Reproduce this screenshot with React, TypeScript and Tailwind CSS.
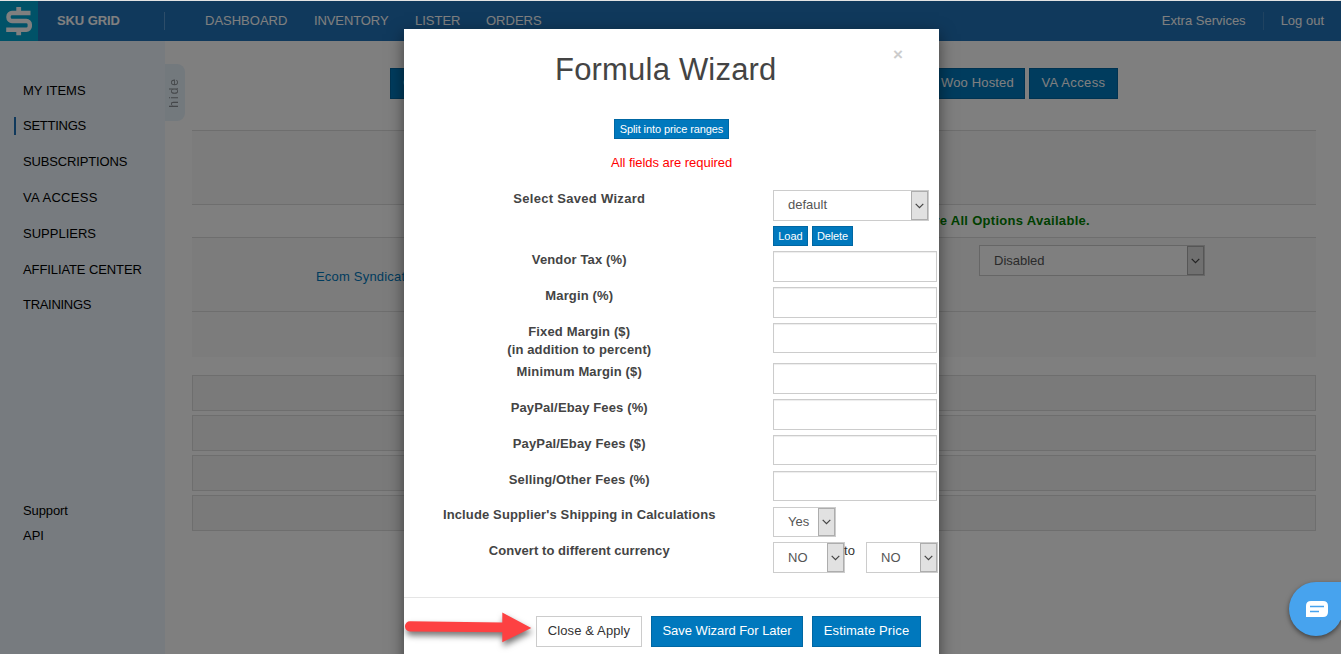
import type { ReactNode } from "react";

const navLinks = [
  { label: "DASHBOARD", width: "w-[109px]" },
  { label: "INVENTORY", width: "w-[101px] tracking-[-0.1px]" },
  { label: "LISTER", width: "w-[71px]" },
  { label: "ORDERS", width: "" },
];

const sideLinks = [
  { label: "MY ITEMS", style: "" },
  { label: "SETTINGS", style: "-mt-px tracking-[-0.25px]", active: true },
  { label: "SUBSCRIPTIONS", style: "tracking-[-0.15px]" },
  { label: "VA ACCESS", style: "tracking-[0.3px]" },
  { label: "SUPPLIERS", style: "" },
  { label: "AFFILIATE CENTER", style: "tracking-[-0.1px]" },
  { label: "TRAININGS", style: "-mt-px tracking-[-0.3px]" },
];

const feeFields = [
  { label: "Vendor Tax (%)", inputHeight: "h-[31px]" },
  { label: "Margin (%)", inputHeight: "h-[31px]" },
  { label: "Fixed Margin ($)", hint: "(in addition to percent)", inputHeight: "h-[30px]" },
  { label: "Minimum Margin ($)", inputHeight: "h-[31px]" },
  { label: "PayPal/Ebay Fees (%)", inputHeight: "h-[31px]" },
  { label: "PayPal/Ebay Fees ($)", inputHeight: "h-[30px]" },
  { label: "Selling/Other Fees (%)", inputHeight: "h-[30px]" },
];

interface SelectBoxProps {
  value: string;
  className: string;
}

function SelectBox({ value, className }: SelectBoxProps) {
  return (
    <div
      className={`flex shrink-0 border border-[#ccc] bg-white text-[13px] text-[#555] ${className}`}
    >
      <span className="flex-1 pl-3.5">{value}</span>
      <span className="flex w-[17px] items-center justify-center border border-[#adadad] bg-[#e1e1e1]">
        <svg width="9" height="6" viewBox="0 0 9 6" fill="none">
          <path d="M0.7 0.8 4.5 4.6 8.3 0.8" stroke="#444" strokeWidth="1.2" />
        </svg>
      </span>
    </div>
  );
}

interface ButtonProps {
  children?: ReactNode;
  className?: string;
}

function PrimaryButton({ children, className = "" }: ButtonProps) {
  return (
    <button
      className={`h-[31px] shrink-0 border border-[#0067a3] bg-[#0078bd] pb-0.5 text-[13px] leading-none whitespace-nowrap text-white ${className}`}
    >
      {children}
    </button>
  );
}

function SmallButton({ children, className = "" }: ButtonProps) {
  return (
    <button
      className={`h-5 border border-[#0067a3] bg-[#0078bd] text-[11px] leading-none whitespace-nowrap text-white ${className}`}
    >
      {children}
    </button>
  );
}

interface FormRowProps {
  label: string;
  hint?: string;
  className: string;
  children: ReactNode;
}

function FormRow({ label, hint, className, children }: FormRowProps) {
  return (
    <div className={`flex ${className}`}>
      <div className="mr-[18.5px] w-[350.5px] text-center text-[13px] leading-[18px] font-bold text-[#444]">
        {label}
        {hint && <div>{hint}</div>}
      </div>
      {children}
    </div>
  );
}

function Logo() {
  return (
    <div className="flex h-10 w-[38px] items-center justify-center bg-[#00a5d0]">
      <svg width="28" height="30" viewBox="0 0 28 30" fill="none">
        <path
          d="M25.5 7H7A3.5 3.5 0 0 0 3.5 10.5V11.5A3.5 3.5 0 0 0 7 15H21.3A3.5 3.5 0 0 1 24.8 18.5V20.3A3.5 3.5 0 0 1 21.3 23.8H1.2"
          stroke="#fff"
          strokeWidth="4.4"
        />
        <path d="M13.7 1V6M13.7 24V29.2" stroke="#fff" strokeWidth="4.8" />
      </svg>
    </div>
  );
}

function Header() {
  return (
    <header className="flex h-10 shrink-0 items-center bg-[#2173b8] text-[13px] text-white">
      <Logo />
      <span className="ml-[19px] w-[107px] font-bold tracking-[-0.1px]">SKU GRID</span>
      <span className="h-[18px] w-px bg-[#5b9bd2]" />
      <nav className="ml-10 flex">
        {navLinks.map((link) => (
          <span key={link.label} className={link.width}>
            {link.label}
          </span>
        ))}
      </nav>
      <span className="ml-auto">Extra Services</span>
      <span className="mx-[17px] h-[18px] w-px bg-[#4186c2]" />
      <span className="mr-[17px]">Log out</span>
    </header>
  );
}

function Sidebar() {
  return (
    <aside className="w-[165px] shrink-0 bg-[#eef7ff] pt-8 text-[13px] text-black">
      {sideLinks.map((link) => (
        <div key={link.label} className={`flex h-9 items-center ${link.style}`}>
          <span
            className={`ml-3.5 h-[18px] w-0.5 ${link.active ? "bg-[#2173b8]" : ""}`}
          />
          <span className="ml-[7px]">{link.label}</span>
        </div>
      ))}
      <div className="mt-[175px] ml-[23px] leading-[25px]">
        <div className="tracking-[-0.1px]">Support</div>
        <div>API</div>
      </div>
    </aside>
  );
}

function SettingsPage() {
  return (
    <main className="relative flex-1 bg-white pt-[27px] pr-[25px] pl-[27px]">
      <div className="absolute top-[23px] left-0 flex h-[57px] w-5 items-center justify-center rounded-r-lg bg-[#e6f2fb] pr-[3px]">
        <span className="rotate-180 text-[12px] tracking-[2px] text-[#8a8f94] [writing-mode:vertical-rl]">
          hide
        </span>
      </div>
      <div className="ml-[198px] flex gap-1">
        <PrimaryButton className="w-[240px] pl-3 text-left">General</PrimaryButton>
        <PrimaryButton className="w-[267px]" />
        <PrimaryButton className="w-[120px] pl-[35px] text-left tracking-[0.15px]">
          Woo Hosted
        </PrimaryButton>
        <PrimaryButton className="w-[89px] tracking-[0.4px]">VA Access</PrimaryButton>
      </div>
      <section className="mt-[31px] text-[13px]">
        <div className="h-[74px] border-t border-[#ddd] bg-[#f9f9f9]" />
        <div className="h-[33px] border-t border-[#ddd] pr-[226px] text-right leading-[31px] font-bold tracking-[0.3px] text-[#008000]">
          Are All Options Available.
        </div>
        <div className="flex h-[74px] border-t border-[#ddd] bg-[#f9f9f9] pt-[7px]">
          <span className="mt-[22px] ml-[124px] w-[663px] tracking-[0.2px] text-[#0078bd]">
            Ecom Syndicator
          </span>
          <SelectBox value="Disabled" className="h-[31px] w-[226px] leading-[29px]" />
        </div>
        <div className="h-[46px] border-t border-[#ddd] bg-[#f9f9f9]" />
      </section>
      <div className="mt-[18px] flex flex-col gap-1">
        {[0, 1, 2, 3].map((panel) => (
          <div key={panel} className="h-9 border border-[#ddd] bg-[#f5f5f5]" />
        ))}
      </div>
    </main>
  );
}

function PointerArrow() {
  return (
    <svg
      className="absolute top-[578px] left-0 overflow-visible drop-shadow-[1px_4px_3px_rgba(0,0,0,0.55)]"
      width="130"
      height="40"
      viewBox="0 0 130 40"
    >
      <path
        d="M6 14.3 98.3 15.6V5.6L127.3 21 98.3 35.3V25.3L6 24.4A5 5 0 0 1 6 14.3Z"
        fill="#fd4142"
      />
    </svg>
  );
}

function FormulaWizard() {
  return (
    <div className="absolute top-[29px] left-[404px] h-[660px] w-[535px] bg-white shadow-[0_5px_15px_rgba(0,0,0,0.5)]">
      <span className="absolute top-4 right-9 text-[17px] leading-5 font-bold text-[#ccc]">
        ×
      </span>
      <h1 className="pt-[23px] pl-[151px] text-[31px] leading-9 tracking-[0.2px] text-[#444]">
        Formula Wizard
      </h1>
      <div className="mt-[31px] ml-[210px] flex h-5">
        <SmallButton className="w-[115px] tracking-[-0.1px]">
          Split into price ranges
        </SmallButton>
      </div>
      <p className="mt-3.5 ml-[207px] text-[13px] leading-5 tracking-[-0.04px] text-[#f00]">
        All fields are required
      </p>

      <div className="mt-[17px]">
        <FormRow label="Select Saved Wizard" className="h-[61px] tracking-[0.3px]">
          <div className="tracking-normal">
            <SelectBox value="default" className="h-[31px] w-[156px] leading-[27px]" />
            <div className="mt-[5px] flex gap-1">
              <SmallButton className="w-[35px]">Load</SmallButton>
              <SmallButton className="w-[41px] tracking-[-0.1px]">Delete</SmallButton>
            </div>
          </div>
        </FormRow>
        {feeFields.map((field) => (
          <FormRow
            key={field.label}
            label={field.label}
            hint={field.hint}
            className={`tracking-[0.14px] ${field.hint ? "h-10" : "h-9"}`}
          >
            <input
              className={`w-[164px] border border-[#ccc] bg-white shadow-[inset_0_1px_1px_rgba(0,0,0,0.075)] ${field.inputHeight}`}
            />
          </FormRow>
        ))}
        <div className="flex h-[35px]">
          <div className="-mt-px mr-[18.5px] w-[350.5px] text-center text-[13px] leading-[18px] font-bold tracking-[0.14px] text-[#444]">
            Include Supplier's Shipping in Calculations
          </div>
          <SelectBox value="Yes" className="h-[30px] w-[63px] leading-[27px]" />
        </div>
        <FormRow
          label="Convert to different currency"
          className="h-[55px] tracking-[0.06px]"
        >
          <SelectBox value="NO" className="h-[31px] w-[72px] leading-[29px]" />
          <span className="-ml-px w-[22px] text-[13px] leading-[18px] text-[#333]">to</span>
          <SelectBox value="NO" className="h-[31px] w-[72px] leading-[29px]" />
        </FormRow>
      </div>

      <div className="flex border-t border-[#e5e5e5] pt-[18px] pl-[132px]">
        <button className="h-[31px] w-[106px] border border-[#ccc] bg-white pb-0.5 text-[13px] leading-none tracking-[0.12px] text-[#333]">
          Close &amp; Apply
        </button>
        <PrimaryButton className="ml-[9px] w-[152px] tracking-[-0.04px]">
          Save Wizard For Later
        </PrimaryButton>
        <PrimaryButton className="ml-[9px] w-[109px] tracking-[0.12px]">
          Estimate Price
        </PrimaryButton>
      </div>
      <PointerArrow />
    </div>
  );
}

function ChatBubble() {
  return (
    <div className="absolute top-[582px] left-[1289px] flex size-[54px] items-center justify-center rounded-full rounded-tr-none bg-[#47a3ee] pl-0.5 shadow-[0_2px_5px_rgba(0,0,0,0.5)]">
      <svg width="22" height="16" viewBox="0 0 22 16" fill="none">
        <path d="M5 0H17Q22 0 22 5V11Q22 16 17 16H0V5Q0 0 5 0Z" fill="#fff" />
        <path d="M4 5.5H18M4 10.5H13" stroke="#47a3ee" strokeWidth="1.3" />
      </svg>
    </div>
  );
}

export default function App() {
  return (
    <div className="relative h-[654px] w-[1341px] overflow-hidden bg-white font-['Liberation_Sans',Arial,sans-serif]">
      <div className="flex h-full flex-col pt-px">
        <Header />
        <div className="flex flex-1">
          <Sidebar />
          <SettingsPage />
        </div>
      </div>
      <div className="absolute inset-x-0 top-px bottom-0 bg-black/50" />
      <div className="absolute inset-x-0 top-0 h-px bg-[#e3e3e3]" />
      <FormulaWizard />
      <ChatBubble />
    </div>
  );
}
